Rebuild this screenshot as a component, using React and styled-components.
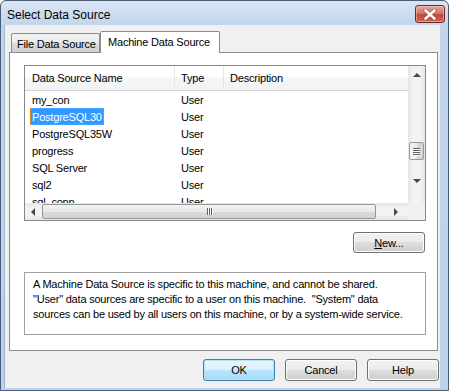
import React from "react";
import styled, { createGlobalStyle } from "styled-components";

const GlobalStyle = createGlobalStyle`
  html, body {
    margin: 0;
    padding: 0;
    background: #ffffff;
  }
  body {
    font-family: "Liberation Sans", Arial, sans-serif;
    font-size: 11px;
    letter-spacing: -0.2px;
    color: #000;
  }
  * {
    box-sizing: border-box;
  }
`;

const Window = styled.div`
  width: 449px;
  height: 391px;
  border: 1px solid #4b5d73;
  border-radius: 6px 6px 0 0;
  background: linear-gradient(#d9e6f5, #c2d5ec 24px, #bcd1ea);
  display: flex;
  flex-direction: column;
  overflow: hidden;
`;

const TitleBar = styled.div`
  height: 24px;
  flex: none;
  display: flex;
  align-items: center;
  justify-content: space-between;
  padding: 0 3px 0 6px;
`;

const Title = styled.div`
  font-size: 12px;
  letter-spacing: 0;
  color: #000;
  margin-top: 3px;
`;

const CloseButton = styled.div`
  width: 30px;
  height: 18px;
  margin-top: 2px;
  border: 1px solid #6e2a25;
  border-radius: 3px;
  background: linear-gradient(#e8a596, #d0776a 45%, #c0473a 55%, #cf6a55);
  box-shadow: inset 0 0 0 1px rgba(255, 220, 210, 0.45);
  display: flex;
  align-items: center;
  justify-content: center;
`;

const Client = styled.div`
  flex: 1;
  margin: 0 8px 2px 3px;
  background: #f0f0f0;
  border-left: 1px solid #9fb6d2;
  display: flex;
  flex-direction: column;
  padding: 6px 1px 0 4px;
`;

const TabStrip = styled.div`
  display: flex;
  align-items: flex-end;
  height: 21px;
  padding-left: 2px;
  position: relative;
  z-index: 1;
`;

const Tab = styled.div`
  height: ${(p) => (p.$active ? "22px" : "19px")};
  margin-bottom: ${(p) => (p.$active ? "-1px" : "0")};
  width: ${(p) => p.$width}px;
  border: 1px solid #898c95;
  border-bottom: none;
  border-radius: 2px 2px 0 0;
  background: ${(p) =>
    p.$active ? "#ffffff" : "linear-gradient(#f3f3f3, #ebebeb 50%, #dddddd 50%, #cfcfcf)"};
  padding: ${(p) => (p.$active ? "4px 0 0 7px" : "4px 0 0 5px")};
  white-space: nowrap;
  font-size: 11px;
`;

const Panel = styled.div`
  width: 429px;
  height: 299px;
  border: 1px solid #898c95;
  background: #ffffff;
  padding: 12px 11px 0 14px;
  display: flex;
  flex-direction: column;
`;

const ListView = styled.div`
  width: 402px;
  height: 156px;
  border: 1px solid #828790;
  display: grid;
  grid-template-columns: 383px 17px;
  grid-template-rows: 137px 17px;
  background: #fff;
`;

const ListArea = styled.div`
  overflow: hidden;
`;

const HeaderRow = styled.div`
  display: grid;
  grid-template-columns: 150px 49px 1fr;
  height: 25px;
  border-bottom: 1px solid #d5d5d5;
  background: linear-gradient(#ffffff 45%, #f6f7f9 45%, #f1f2f4);
`;

const HeaderCell = styled.div`
  display: flex;
  align-items: center;
  padding-left: ${(p) => p.$pad || 6}px;
  border-right: ${(p) => (p.$last ? "none" : "1px solid #e3e6ea")};
  font-size: 11px;
`;

const Row = styled.div`
  display: grid;
  grid-template-columns: 150px 49px 1fr;
  height: 17px;
`;

const Cell = styled.div`
  display: flex;
  align-items: center;
  padding-left: ${(p) => p.$pad}px;
  font-size: 11px;
  white-space: nowrap;
`;

const ItemName = styled.span`
  display: inline-flex;
  align-items: center;
  height: 17px;
  padding: 0 1px;
  border: 1px dotted ${(p) => (p.$selected ? "#e8922e" : "transparent")};
  background: ${(p) => (p.$selected ? "#3399ff" : "transparent")};
  color: ${(p) => (p.$selected ? "#ffffff" : "#000")};
`;

const VScroll = styled.div`
  background: linear-gradient(90deg, #e6e6e6, #f2f2f2 30%, #f2f2f2 70%, #e6e6e6);
  display: flex;
  flex-direction: column;
  align-items: center;
  padding-top: 7px;
`;

const HScroll = styled.div`
  background: linear-gradient(#e6e6e6, #f2f2f2 30%, #f2f2f2 70%, #e6e6e6);
  display: flex;
  align-items: center;
  padding-left: 6px;
`;

const Corner = styled.div`
  background: #f0f0f0;
`;

const Arrow = styled.div`
  width: 0;
  height: 0;
  flex: none;
  ${(p) =>
    p.$dir === "up"
      ? "border-left: 4px solid transparent; border-right: 4px solid transparent; border-bottom: 4px solid #4a4a4a;"
      : p.$dir === "down"
      ? "border-left: 4px solid transparent; border-right: 4px solid transparent; border-top: 4px solid #4a4a4a;"
      : p.$dir === "left"
      ? "border-top: 4px solid transparent; border-bottom: 4px solid transparent; border-right: 4px solid #4a4a4a;"
      : "border-top: 4px solid transparent; border-bottom: 4px solid transparent; border-left: 4px solid #4a4a4a;"}
`;

const VThumb = styled.div`
  width: 15px;
  height: 18px;
  margin-top: 65px;
  margin-bottom: 19px;
  border: 1px solid #979797;
  border-radius: 2px;
  background: linear-gradient(90deg, #f3f3f3, #e8e8e8 50%, #d8d8d8 50%, #d4d4d4);
  display: flex;
  flex-direction: column;
  align-items: center;
  justify-content: center;
  gap: 1px;
`;

const HThumb = styled.div`
  width: 334px;
  height: 15px;
  margin: 0 18px 0 7px;
  border: 1px solid #979797;
  border-radius: 2px;
  background: linear-gradient(#f3f3f3, #e8e8e8 50%, #d8d8d8 50%, #d4d4d4);
  display: flex;
  align-items: center;
  justify-content: center;
  gap: 1px;
`;

const GripH = styled.div`
  width: 7px;
  height: 1px;
  background: #5f5f5f;
  box-shadow: 0 1px 0 #ffffff;
`;

const GripV = styled.div`
  width: 1px;
  height: 7px;
  background: #5f5f5f;
  box-shadow: 1px 0 0 #ffffff;
`;

const NewRow = styled.div`
  display: flex;
  justify-content: flex-end;
  margin-top: 11px;
  padding-right: 1px;
`;

const Button = styled.div`
  width: ${(p) => p.$width || 72}px;
  height: ${(p) => p.$height || 22}px;
  border: 1px solid ${(p) => (p.$default ? "#3c7fb1" : "#707070")};
  border-radius: 3px;
  background: ${(p) =>
    p.$default
      ? "linear-gradient(#eaf6fd, #d9f0fc 50%, #bee6fd 50%, #a7d9f5)"
      : "linear-gradient(#f2f2f2, #ebebeb 50%, #dddddd 50%, #cfcfcf)"};
  box-shadow: inset 0 0 0 1px ${(p) => (p.$default ? "#b9e1f6" : "#fcfcfc")};
  display: flex;
  align-items: center;
  justify-content: center;
  font-size: 11px;
  color: #000;
`;

const Description = styled.div`
  margin-top: 19px;
  width: 402px;
  height: 63px;
  border: 1px solid #a0a0a0;
  padding: 4px 0 0 8px;
  line-height: 15px;
  font-size: 11px;
  white-space: pre;
`;

const ButtonRow = styled.div`
  display: flex;
  justify-content: flex-end;
  gap: 10px;
  margin-top: 8px;
`;

const rows = [
  ["my_con", "User"],
  ["PostgreSQL30", "User", true],
  ["PostgreSQL35W", "User"],
  ["progress", "User"],
  ["SQL Server", "User"],
  ["sql2", "User"],
  ["sql_conn", "User"],
];

const CloseIcon = () => (
  <svg width="14" height="11" viewBox="0 0 14 11">
    <path
      d="M2.5 1.5 L11.5 9.5 M11.5 1.5 L2.5 9.5"
      stroke="#6a2a24"
      strokeWidth="4.2"
      strokeLinecap="round"
      opacity="0.5"
    />
    <path d="M2.5 1.5 L11.5 9.5 M11.5 1.5 L2.5 9.5" stroke="#ffffff" strokeWidth="2.6" strokeLinecap="round" />
  </svg>
);

export default function App() {
  return (
    <>
      <GlobalStyle />
      <Window>
        <TitleBar>
          <Title>Select Data Source</Title>
          <CloseButton>
            <CloseIcon />
          </CloseButton>
        </TitleBar>
        <Client>
          <TabStrip>
            <Tab $width={89}>File Data Source</Tab>
            <Tab $width={120} $active>
              Machine Data Source
            </Tab>
          </TabStrip>
          <Panel>
            <ListView>
              <ListArea>
                <HeaderRow>
                  <HeaderCell $pad={7}>Data Source Name</HeaderCell>
                  <HeaderCell>Type</HeaderCell>
                  <HeaderCell $last>Description</HeaderCell>
                </HeaderRow>
                {rows.map(([name, type, sel]) => (
                  <Row key={name}>
                    <Cell $pad={5}>
                      <ItemName $selected={sel}>{name}</ItemName>
                    </Cell>
                    <Cell $pad={6}>{type}</Cell>
                    <Cell $pad={6} />
                  </Row>
                ))}
              </ListArea>
              <VScroll>
                <Arrow $dir="up" />
                <VThumb>
                  <GripH />
                  <GripH />
                  <GripH />
                  <GripH />
                </VThumb>
                <Arrow $dir="down" />
              </VScroll>
              <HScroll>
                <Arrow $dir="left" />
                <HThumb>
                  <GripV />
                  <GripV />
                  <GripV />
                </HThumb>
                <Arrow $dir="right" />
              </HScroll>
              <Corner />
            </ListView>
            <NewRow>
              <Button $width={72} $height={21}>
                <u>N</u>ew...
              </Button>
            </NewRow>
            <Description>
              {"A Machine Data Source is specific to this machine, and cannot be shared.\n" +
                "\"User\" data sources are specific to a user on this machine.  \"System\" data\n" +
                "sources can be used by all users on this machine, or by a system-wide service."}
            </Description>
          </Panel>
          <ButtonRow>
            <Button $default>OK</Button>
            <Button>Cancel</Button>
            <Button>Help</Button>
          </ButtonRow>
        </Client>
      </Window>
    </>
  );
}
